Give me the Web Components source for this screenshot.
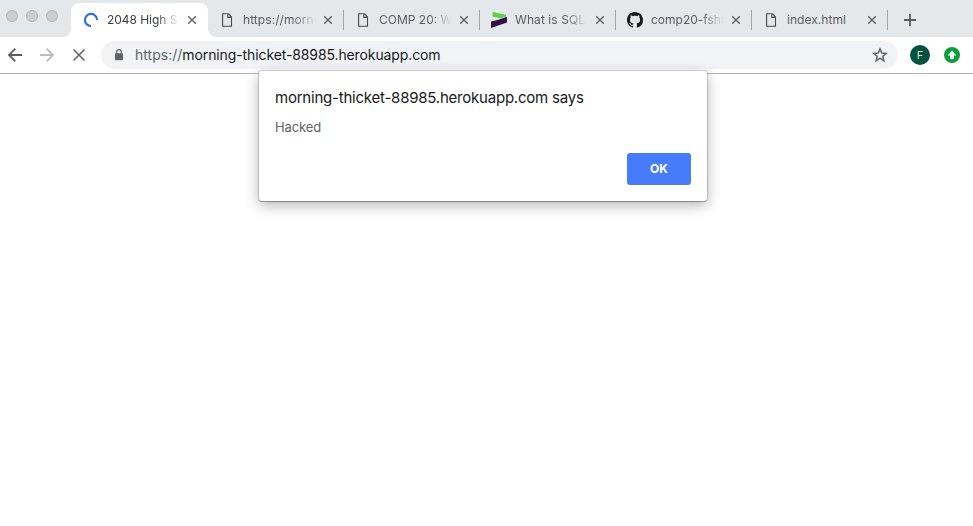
<!DOCTYPE html>
<html lang="en">
<head>
<meta charset="utf-8">
<title>2048 High Scores</title>
<style>
html,body{margin:0;height:100%;overflow:hidden;background:#fff}
body{font-family:Inter,Roboto,"Liberation Sans",sans-serif;color:#5f6368}
</style>
</head>
<body>
<browser-window>
  <tab-strip slot="tabs">
    <browser-tab active label="2048 High S" spacing="-0.04"><ui-icon name="spinner"></ui-icon></browser-tab>
    <browser-tab label="https://morn" spacing="0.06"><ui-icon name="file"></ui-icon></browser-tab>
    <browser-tab label="COMP 20: W"><ui-icon name="file"></ui-icon></browser-tab>
    <browser-tab label="What is SQL" spacing="0.08"><ui-icon name="veracode"></ui-icon></browser-tab>
    <browser-tab label="comp20-fsha"><ui-icon name="github"></ui-icon></browser-tab>
    <browser-tab label="index.html" spacing="0.04"><ui-icon name="file"></ui-icon></browser-tab>
  </tab-strip>
  <tool-bar slot="toolbar"></tool-bar>
  <alert-dialog slot="dialog" heading="morning-thicket-88985.herokuapp.com says" action="OK">Hacked</alert-dialog>
</browser-window>
<script>
const ICONS = {
  spinner:[16,16,'<path d="M14.1 8A6.1 6.1 0 1 0 8 14.1" fill="none" stroke="#2b6bf0" stroke-width="2.1"/>'],
  file:[16,16,'<path d="M3.6 1.7h5.7l3.2 3.2v9.4H3.6z M8.8 1.7v3.7h3.7" fill="none" stroke="#46494d" stroke-width="1.1"/>'],
  veracode:[16,16,'<path d="M1.6 0L15 2.7v1.8L9.5 6.3 1.6 4.8z" fill="#55d444"/><path d="M0 9.4l6.5-1.3L16 4.7v5.8L0 16z" fill="#310f48"/>'],
  github:[16,16,'<path fill="#17181b" fill-rule="evenodd" d="M8 0C3.58 0 0 3.58 0 8c0 3.54 2.29 6.53 5.47 7.59.4.07.55-.17.55-.38 0-.19-.01-.82-.01-1.49-2.01.37-2.53-.49-2.69-.94-.09-.23-.48-.94-.82-1.13-.28-.15-.68-.52-.01-.53.63-.01 1.08.58 1.23.82.72 1.21 1.87.87 2.33.66.07-.52.28-.87.51-1.07-1.78-.2-3.64-.89-3.64-3.95 0-.87.31-1.59.82-2.15-.08-.2-.36-1.02.08-2.12 0 0 .67-.21 2.2.82.64-.18 1.32-.27 2-.27s1.36.09 2 .27c1.53-1.04 2.2-.82 2.2-.82.44 1.1.16 1.92.08 2.12.51.56.82 1.27.82 2.15 0 3.07-1.87 3.75-3.65 3.95.29.25.54.73.54 1.48 0 1.07-.01 1.93-.01 2.2 0 .21.15.46.55.38A8.01 8.01 0 0 0 16 8c0-4.42-3.58-8-8-8z"/>'],
  close:[10,10,'<path d="M1.2 1.2l7.6 7.6M8.8 1.2L1.2 8.8" stroke="#5f6368" stroke-width="1.4"/>'],
  plus:[12,12,'<path d="M6 0v12M0 6h12" stroke="#5a5e62" stroke-width="1.8"/>'],
  back:[16,16,'<path d="M15 8H2.2M8.3 1.7L2 8l6.3 6.3" fill="none" stroke="#5a5d62" stroke-width="1.8"/>'],
  forward:[16,16,'<path d="M1 8h12.8M7.7 1.7L14 8l-6.3 6.3" fill="none" stroke="#b9bbbe" stroke-width="1.8"/>'],
  stop:[14,14,'<path d="M1.5 1.5l11 11M12.5 1.5l-11 11" stroke="#5f6267" stroke-width="1.5"/>'],
  lock:[10,12,'<path d="M2.7 5V3a2.3 2.3 0 0 1 4.6 0V5" fill="none" stroke="#5f6368" stroke-width="1.2"/><rect x="1" y="4.3" width="8" height="7" rx=".8" fill="#5f6368"/>'],
  star:[16,16,'<path d="M8 1.9l1.75 4.1 4.5.4-3.4 2.95 1 4.4L8 11.4l-3.85 2.35 1-4.4L1.75 6.4l4.5-.4z" fill="none" stroke="#5f6368" stroke-width="1.5"/>'],
  update:[16,16,'<circle cx="8" cy="8" r="8" fill="#0b9d3a"/><path d="M8 3.5L12.3 8.5H10V12H6V8.5H3.7z" fill="#fff"/>']
};
const attach = (el, html) => { el.attachShadow({mode:'open'}).innerHTML = html; };

customElements.define('ui-icon', class extends HTMLElement {
  connectedCallback(){
    const [w,h,body] = ICONS[this.getAttribute('name')];
    attach(this, `<style>:host{display:block;flex:none;width:${w}px;height:${h}px}svg{display:block}</style><svg width="${w}" height="${h}" viewBox="0 0 ${w} ${h}">${body}</svg>`);
  }
});

customElements.define('browser-window', class extends HTMLElement {
  connectedCallback(){
    attach(this, `<style>:host{display:flex;flex-direction:column;position:relative;height:100vh;background:#fff}
      .overlay{position:absolute;top:71px;left:259px}</style>
      <slot name="tabs"></slot><slot name="toolbar"></slot><div class="overlay"><slot name="dialog"></slot></div>`);
  }
});

customElements.define('tab-strip', class extends HTMLElement {
  connectedCallback(){
    attach(this, `<style>:host{display:flex;height:37px;background:#e5e8eb;flex:none}
      .lights{display:flex;gap:8px;padding:10px 0 0 6px;width:71px;box-sizing:border-box}
      .lights i{width:12px;height:12px;border-radius:50%;background:#cecdcd;border:1px solid #b3b3b3;box-sizing:border-box}
      ui-icon{margin:14px 0 0 17px}</style>
      <div class="lights"><i></i><i></i><i></i></div><slot></slot><ui-icon name="plus"></ui-icon>`);
  }
});

customElements.define('browser-tab', class extends HTMLElement {
  connectedCallback(){
    attach(this, `<style>
      :host{display:flex;align-items:center;box-sizing:border-box;position:relative;width:136px;height:37px;padding:3px 10px 0 12px;flex:none;color:#5a5d62}
      :host([active]){color:#3c4043}
      :host([active])::before{content:"";position:absolute;left:-8px;right:-9px;top:3px;bottom:0;background:
        radial-gradient(circle at 0 0,transparent 7.6px,#fff 8.2px) 0 100%/8px 8px no-repeat,
        radial-gradient(circle at 100% 0,transparent 7.6px,#fff 8.2px) 100% 100%/8px 8px no-repeat}
      :host([active])::after{content:"";position:absolute;left:0;right:-1px;top:3px;bottom:0;background:#fff;border-radius:8px 8px 0 0}
      :host(:not([active]))::after{content:"";position:absolute;right:-1px;top:10px;width:1px;height:20px;background:#a2a6aa}
      slot,span,.x{position:relative;z-index:1}
      slot{display:block}
      span{width:73px;margin-left:8px;white-space:nowrap;font-size:12px;line-height:18px;letter-spacing:${this.getAttribute('spacing')||0}px;
        -webkit-mask-image:linear-gradient(90deg,#000 50px,transparent 73px);mask-image:linear-gradient(90deg,#000 50px,transparent 73px)}
      :host([label="index.html"]) span{-webkit-mask-image:none;mask-image:none}
      .x{margin-left:7px}</style>
      <slot></slot><span>${this.getAttribute('label')}</span><ui-icon class="x" name="close"></ui-icon>`);
  }
});

customElements.define('tool-bar', class extends HTMLElement {
  connectedCallback(){
    attach(this, `<style>
      :host{display:flex;align-items:center;box-sizing:border-box;height:37px;flex:none;background:#fff;border-bottom:1px solid #b1b2b4;padding-left:7px}
      .nav{display:flex;align-items:center;gap:16px}
      .nav ui-icon:last-child{margin-left:1px}
      .box{display:flex;align-items:center;box-sizing:border-box;width:797px;height:28px;border-radius:14px;background:#f1f3f4;margin-left:15px;padding:0 10px 0 13px}
      .url{margin-left:11px;flex:1;font-size:14px;line-height:20px;letter-spacing:-.1px;white-space:nowrap;color:#5f6368}
      .url span{letter-spacing:.02px}
      .url b{font-weight:400;color:#17181b;letter-spacing:-.11px}
      .avatar{width:20px;height:20px;border-radius:50%;background:#04513f;color:#d5e4df;font-size:11px;line-height:20px;text-align:center;margin:0 14px 0 12px}
      </style>
      <div class="nav"><ui-icon name="back"></ui-icon><ui-icon name="forward"></ui-icon><ui-icon name="stop"></ui-icon></div>
      <div class="box"><ui-icon name="lock"></ui-icon><div class="url"><span>https://</span><b>morning-thicket-88985.herokuapp.com</b></div><ui-icon name="star"></ui-icon></div>
      <div class="avatar">F</div><ui-icon name="update"></ui-icon>`);
  }
});

customElements.define('alert-dialog', class extends HTMLElement {
  connectedCallback(){
    attach(this, `<style>
      :host{display:flex;flex-direction:column;box-sizing:border-box;width:448px;height:130px;padding:16px;background:#fff;border-radius:3px;box-shadow:0 0 0 1px rgba(0,0,0,.14),0 1px 1px rgba(0,0,0,.2),0 4px 14px rgba(0,0,0,.3)}
      .title{font-size:15px;line-height:22px;color:#17181b;letter-spacing:-.22px;white-space:nowrap}
      .msg{margin-top:8px;font-size:13px;line-height:20px;letter-spacing:-.1px;color:#5f6368}
      button{margin:auto 0 0 auto;width:64px;height:32px;border:0;padding:0;border-radius:3px;background:#467cf9;color:#fff;font:700 12px/32px Inter,sans-serif}
      </style>
      <div class="title">${this.getAttribute('heading')}</div><div class="msg"><slot></slot></div><button>${this.getAttribute('action')}</button>`);
  }
});
</script>
</body>
</html>
